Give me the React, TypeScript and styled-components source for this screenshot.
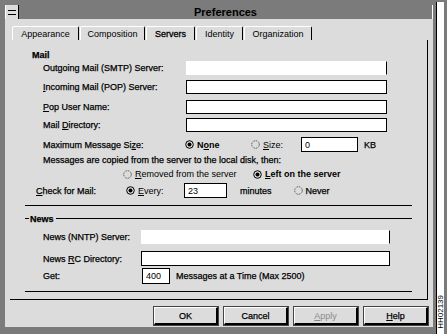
import React from "react";
import styled, { createGlobalStyle } from "styled-components";

const GlobalStyle = createGlobalStyle`
  html, body {
    margin: 0;
    padding: 0;
    background: #7b7b7b;
  }
  body {
    font-family: "Liberation Sans", Arial, sans-serif;
    font-size: 9px;
    color: #000;
  }
`;

const Screen = styled.div`
  width: 447px;
  height: 334px;
  display: flex;
  background: #7b7b7b;
  overflow: hidden;
`;

const Window = styled.div`
  margin-left: 5px;
  width: 428px;
  height: 327px;
  display: flex;
  flex-direction: column;
`;

const TitleBar = styled.div`
  margin-top: 5px;
  height: 14px;
  display: flex;
  align-items: center;
  border-right: 1px solid #fff;
`;

const SysMenu = styled.div`
  width: 12px;
  height: 14px;
  background: #dcdcdc;
  border-left: 1px solid #fff;
  border-right: 1px solid #000;
  display: flex;
  align-items: center;
  justify-content: center;
  &::before {
    content: "";
    width: 8px;
    height: 3px;
    border-top: 1px solid #000;
    border-bottom: 1px solid #000;
  }
`;

const Title = styled.div`
  flex: 1;
  text-align: center;
  font-size: 11px;
  font-weight: bold;
`;

const Body = styled.div`
  flex: 1;
  background: #dcdcdc;
  padding-top: 7px;
  display: flex;
  flex-direction: column;
`;

const TabRow = styled.div`
  display: flex;
  margin-left: 7px;
  height: 14px;
`;

const Tab = styled.div<{ $w: number; $active?: boolean }>`
  width: ${(p) => p.$w}px;
  box-sizing: border-box;
  border-top: 1px solid #fff;
  border-left: 1px solid #fff;
  border-right: 1px solid #000;
  border-radius: 2px 2px 0 0;
  margin-right: 1px;
  display: flex;
  align-items: center;
  justify-content: center;
  -webkit-text-stroke: ${(p) => (p.$active ? "0.3px #000" : "0")};
`;

const Panel = styled.div`
  margin-left: 5px;
  width: 418px;
  height: 260px;
  box-sizing: border-box;
  border-right: 1px solid #000;
  border-bottom: 1px solid #000;
  -webkit-text-stroke: 0.25px #000;
`;

const Group = styled.div<{ $pb: number }>`
  margin: 0 15px;
  padding-bottom: ${(p) => p.$pb}px;
  border-bottom: 1px solid #000;
`;

const Heading = styled.div`
  margin-top: 9px;
  height: 11px;
  padding-left: 7px;
  font-weight: bold;
  display: flex;
  align-items: center;
`;

const Row = styled.div<{ $mt: number; $h: number; $pl?: number }>`
  margin-top: ${(p) => p.$mt}px;
  height: ${(p) => p.$h}px;
  padding-left: ${(p) => p.$pl ?? 18}px;
  display: flex;
  align-items: center;
  white-space: nowrap;
`;

const Label = styled.span<{ $w: number }>`
  width: ${(p) => p.$w}px;
  flex-shrink: 0;
`;

const Field = styled.div<{ $w: number; $open?: boolean }>`
  width: ${(p) => p.$w}px;
  height: 100%;
  box-sizing: border-box;
  background: #fff;
  border: 1px solid ${(p) => (p.$open ? "transparent" : "#000")};
  border-right-color: #000;
  padding-left: 3px;
  display: flex;
  align-items: center;
  -webkit-text-stroke: 0;
`;

const Choice = styled.span<{ $w?: number }>`
  display: inline-flex;
  align-items: center;
  gap: 3px;
  width: ${(p) => (p.$w ? `${p.$w}px` : "auto")};
  flex-shrink: 0;
`;

const Plain = styled.span`
  -webkit-text-stroke: 0;
`;

const Bold = styled.span`
  font-weight: bold;
  -webkit-text-stroke: 0;
`;

const After = styled.span<{ $ml: number }>`
  margin-left: ${(p) => p.$ml}px;
`;

const NewsHeader = styled.div`
  margin-top: 7px;
  height: 12px;
  display: flex;
  align-items: center;
  font-weight: bold;
`;

const Rule = styled.div<{ $w?: number }>`
  align-self: flex-start;
  margin-top: 5px;
  height: 1px;
  background: #000;
  width: ${(p) => (p.$w ? `${p.$w}px` : "auto")};
  flex: ${(p) => (p.$w ? "none" : 1)};
`;

const NewsTitle = styled.span`
  margin: 0 2px 0 1px;
`;

const ButtonRow = styled.div`
  margin-top: 7px;
  padding-right: 5px;
  display: flex;
  justify-content: flex-end;
  gap: 6px;
`;

const Button = styled.div<{ $disabled?: boolean }>`
  width: 64px;
  height: 18px;
  box-sizing: border-box;
  border-top: 1px solid #fff;
  border-left: 1px solid #fff;
  border-right: 2px solid #000;
  border-bottom: 2px solid #000;
  outline: 1px solid #444;
  display: flex;
  align-items: center;
  justify-content: center;
  color: ${(p) => (p.$disabled ? "#8a8a8a" : "#000")};
  -webkit-text-stroke: ${(p) => (p.$disabled ? "0" : "0.25px #000")};
`;

const Strip = styled.div`
  margin-left: 3px;
  margin-top: 2px;
  width: 8px;
  height: 332px;
  background: #fff;
  border-left: 1px solid #000;
  display: flex;
  flex-direction: column;
  justify-content: flex-end;
  align-items: center;
  padding-bottom: 5px;
  box-sizing: border-box;
`;

const FigureId = styled.span`
  writing-mode: vertical-rl;
  transform: rotate(180deg);
  font-size: 8px;
  line-height: 8px;
`;

const Radio = ({ on }: { on?: boolean }) => (
  <svg width="9" height="9" viewBox="0 0 9 9">
    <circle
      cx="4.5"
      cy="4.5"
      r="3.8"
      fill="#dcdcdc"
      stroke={on ? "#000" : "#555"}
      strokeWidth="1"
      strokeDasharray={on ? undefined : "1.2 0.8"}
    />
    {on && <circle cx="4.5" cy="4.5" r="2" fill="#000" />}
  </svg>
);

export default function App() {
  return (
    <>
      <GlobalStyle />
      <Screen>
        <Window>
          <TitleBar>
            <SysMenu />
            <Title>Preferences</Title>
          </TitleBar>
          <Body>
            <TabRow>
              <Tab $w={67}>Appearance</Tab>
              <Tab $w={65}>Composition</Tab>
              <Tab $w={49} $active>Servers</Tab>
              <Tab $w={47}>Identity</Tab>
              <Tab $w={68}>Organization</Tab>
            </TabRow>
            <Panel>
              <Group $pb={7}>
                <Heading>Mail</Heading>
                <Row $mt={1} $h={14}>
                  <Label $w={143}>Outgoing Mail (SMTP) Server:</Label>
                  <Field $w={201} $open />
                </Row>
                <Row $mt={5} $h={14}>
                  <Label $w={143}><u>I</u>ncoming Mail (POP) Server:</Label>
                  <Field $w={201} />
                </Row>
                <Row $mt={6} $h={14}>
                  <Label $w={143}><u>P</u>op User Name:</Label>
                  <Field $w={201} />
                </Row>
                <Row $mt={4} $h={14}>
                  <Label $w={143}>Mail <u>D</u>irectory:</Label>
                  <Field $w={201} />
                </Row>
                <Row $mt={5} $h={15}>
                  <Label $w={142}>Maximum Message Si<u>z</u>e:</Label>
                  <Choice $w={66}><Radio on /><Bold>N<u>o</u>ne</Bold></Choice>
                  <Choice $w={50}><Radio /><Plain><u>S</u>ize:</Plain></Choice>
                  <Field $w={57}>0</Field>
                  <After $ml={6}>KB</After>
                </Row>
                <Row $mt={3} $h={10}>
                  Messages are copied from the server to the local disk, then:
                </Row>
                <Row $mt={4} $h={10} $pl={98}>
                  <Choice $w={130}><Radio /><Plain><u>R</u>emoved from the server</Plain></Choice>
                  <Choice><Radio on /><Bold><u>L</u>eft on the server</Bold></Choice>
                </Row>
                <Row $mt={4} $h={15} $pl={11}>
                  <Label $w={90}><u>C</u>heck for Mail:</Label>
                  <Choice $w={58}><Radio on /><Plain><u>E</u>very:</Plain></Choice>
                  <Field $w={43}>23</Field>
                  <After $ml={13}>minutes</After>
                  <Choice style={{ marginLeft: 22 }}><Radio /><span>Never</span></Choice>
                </Row>
              </Group>
              <Group $pb={7}>
                <NewsHeader>
                  <Rule $w={4} />
                  <NewsTitle>News</NewsTitle>
                  <Rule />
                </NewsHeader>
                <Row $mt={5} $h={14}>
                  <Label $w={98}>News (NNTP) Server:</Label>
                  <Field $w={249} $open />
                </Row>
                <Row $mt={7} $h={15}>
                  <Label $w={98}>News <u>R</u>C Directory:</Label>
                  <Field $w={249} />
                </Row>
                <Row $mt={2} $h={16}>
                  <Label $w={99}>Get:</Label>
                  <Field $w={28}>400</Field>
                  <After $ml={6}>Messages at a Time (Max 2500)</After>
                </Row>
              </Group>
            </Panel>
            <ButtonRow>
              <Button>OK</Button>
              <Button>Cancel</Button>
              <Button $disabled><span><u>A</u>pply</span></Button>
              <Button><span><u>H</u>elp</span></Button>
            </ButtonRow>
          </Body>
        </Window>
        <Strip>
          <FigureId>HH02139</FigureId>
        </Strip>
      </Screen>
    </>
  );
}
